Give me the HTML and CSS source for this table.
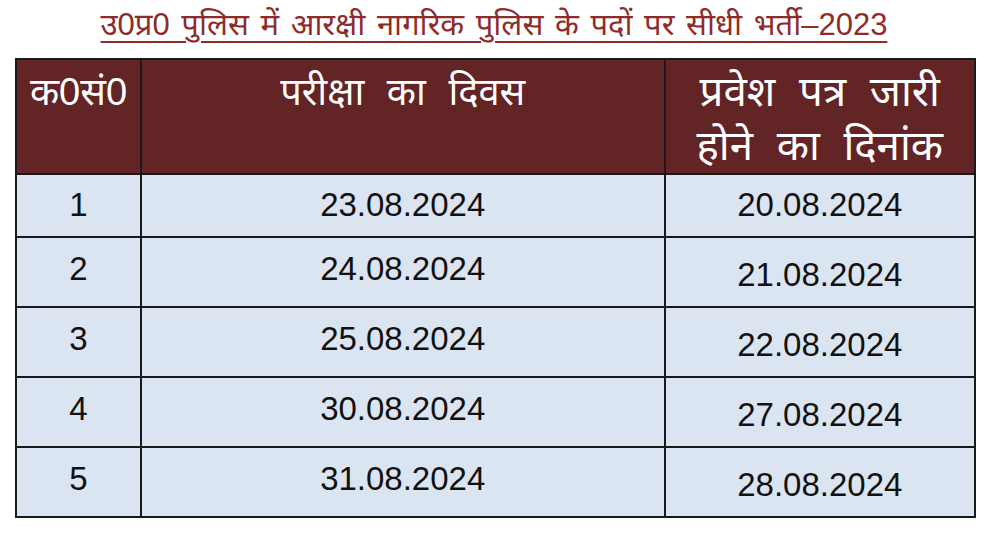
FILE: index.html
```html
<!DOCTYPE html>
<html lang="hi">
<head>
<meta charset="utf-8">
<link rel="stylesheet" href="styles.css">
</head>
<body>
<div class="page">
  <h1 class="title">उ0प्र0 पुलिस में आरक्षी नागरिक पुलिस के पदों पर सीधी भर्ती–2023</h1>
  <table class="grid">
    <colgroup>
      <col class="c1"><col class="c2"><col class="c3">
    </colgroup>
    <thead>
      <tr>
        <th>क0सं0</th>
        <th>परीक्षा का दिवस</th>
        <th class="wide">प्रवेश पत्र जारी<br>होने का दिनांक</th>
      </tr>
    </thead>
    <tbody>
      <tr class="first"><td>1</td><td>23.08.2024</td><td>20.08.2024</td></tr>
      <tr><td>2</td><td>24.08.2024</td><td class="low">21.08.2024</td></tr>
      <tr><td>3</td><td>25.08.2024</td><td class="low">22.08.2024</td></tr>
      <tr><td>4</td><td>30.08.2024</td><td class="low">27.08.2024</td></tr>
      <tr><td>5</td><td>31.08.2024</td><td class="low">28.08.2024</td></tr>
    </tbody>
  </table>
</div>
</body>
</html>
```

FILE: styles.css
```css
html, body {
  margin: 0;
  padding: 0;
  background: #ffffff;
}
.page {
  width: 988px;
  height: 534px;
  padding-top: 5px;
  box-sizing: border-box;
  font-family: "Liberation Sans", "Noto Sans", sans-serif;
}
.title {
  margin: 0 auto;
  width: max-content;
  font-size: 31px;
  font-weight: normal;
  color: #8e2b2b;
  text-decoration: underline;
  text-decoration-thickness: 2px;
  text-underline-offset: 6px;
  line-height: 40px;
  word-spacing: 3px;
}
.grid {
  margin: 13px 0 0 15px;
  width: 961px;
  border-collapse: collapse;
  border: 2px solid #111;
}
.c1 { width: 125px; }
.c2 { width: 525px; }
.c3 { width: 311px; }
.grid th {
  background: #622424;
  color: #ffffff;
  font-weight: normal;
  font-size: 38px;
  line-height: 54px;
  word-spacing: 12px;
  vertical-align: top;
  padding: 5px 0 0;
  border: 2px solid #1a1a1a;
}
.grid th.wide {
  font-size: 42px;
  word-spacing: 12px;
}
.grid td {
  background: #dbe5f1;
  color: #111;
  font-size: 33px;
  text-align: center;
  height: 70px;
  padding: 0 0 6px;
  border: 2px solid #1a1a1a;
  box-sizing: border-box;
}
.grid tr.first td {
  height: 63px;
  padding: 0 0 2px;
}
.grid td.low {
  padding: 6px 0 0;
}
```
